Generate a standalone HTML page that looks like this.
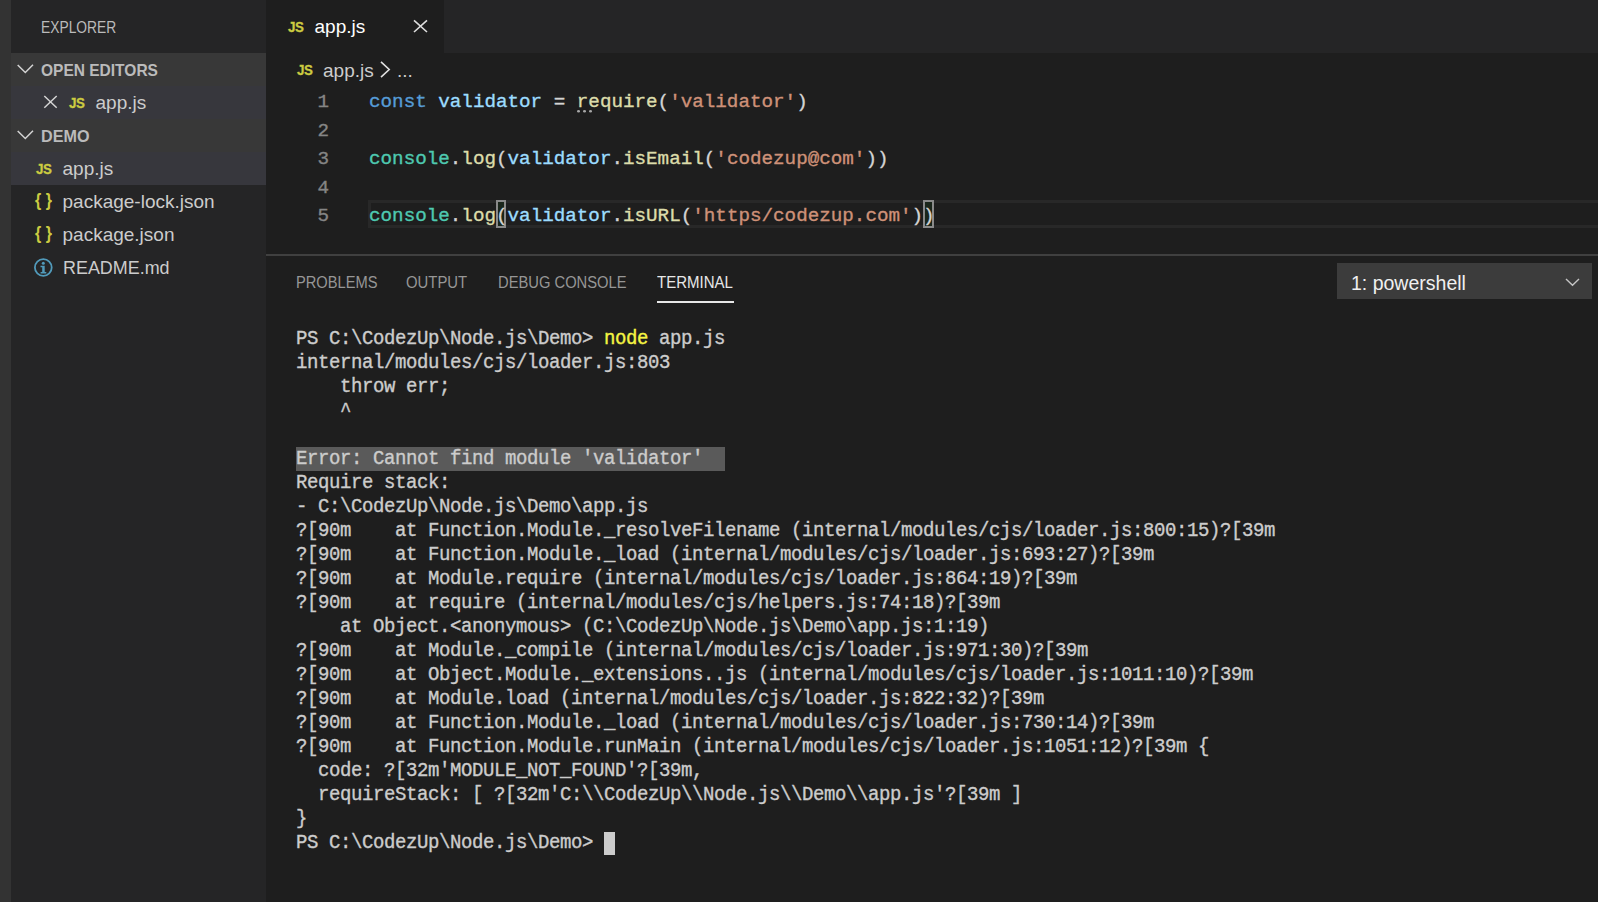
<!DOCTYPE html>
<html><head><meta charset="utf-8">
<style>
*{margin:0;padding:0;box-sizing:border-box}
html,body{width:1598px;height:902px;overflow:hidden;background:#1e1e1e}
body{position:relative;font-family:"Liberation Sans",sans-serif}
.a{position:absolute;white-space:pre}
.sx{display:inline-block;transform-origin:0 0}
#act{left:0;top:0;width:11px;height:902px;background:#333333}
#side{left:11px;top:0;width:255px;height:902px;background:#252526}
.row{position:absolute;left:11px;width:255px;height:33px}
.hdr{background:#383838}
.sel{background:#37373d}
.ui{color:#cccccc;font-size:19px;line-height:33px;height:33px}
#tabs{left:266px;top:0;width:1332px;height:53px;background:#252526}
#tab{left:266px;top:0;width:178px;height:53px;background:#1e1e1e}
.mono{font-family:"Liberation Mono",monospace;-webkit-text-stroke:0.35px currentColor}
.code{font-size:19.24px;line-height:28.5px;height:28.5px}
.term{font-size:19px;letter-spacing:-0.402px;line-height:24px;height:24px;color:#cccccc;left:296px;transform:scaleY(1.08);transform-origin:0 17.3px}
.k{color:#569cd6}.v{color:#9cdcfe}.f{color:#dcdcaa}.s{color:#ce9178}.t{color:#4ec9b0}.p{color:#d4d4d4}
.ln{color:#858585;text-align:right;width:40px;left:289px}
svg{position:absolute;overflow:visible}
.br{display:inline-block;transform:translateY(-2px) scaleY(1.15);transform-origin:0 50%}
.js{display:inline-block;font-size:15.5px;font-weight:bold;color:#cbcb41;letter-spacing:-0.6px;transform:scaleX(0.86);transform-origin:0 50%;-webkit-text-stroke:0.3px #cbcb41}
</style></head><body>
<div id="act" class="a"></div>
<div id="side" class="a"></div>

<!-- sidebar -->
<div class="a" style="left:41px;top:1px;height:53px;line-height:53px;font-size:16.3px;color:#bbbbbb"><span class="sx" style="transform:scaleX(0.848)">EXPLORER</span></div>

<div class="row hdr" style="top:53px"></div>
<div class="row sel" style="top:86px"></div>
<div class="row hdr" style="top:119px"></div>
<div class="row sel" style="top:152px"></div>

<svg style="left:0;top:0" width="1" height="1"><g fill="none" stroke="#d4d4d4" stroke-width="1.5">
<path d="M17.7 65 L25.3 72.5 L33 64.8"/>
<path d="M17.7 131 L25.3 138.5 L33 130.8"/>
</g></svg>
<div class="a" style="left:41px;top:54px;height:33px;line-height:33px;font-size:16.5px;font-weight:bold;color:#bbbbbb"><span class="sx" style="transform:scaleX(0.94)">OPEN EDITORS</span></div>
<div class="a" style="left:41px;top:120px;height:33px;line-height:33px;font-size:16.5px;font-weight:bold;color:#bbbbbb"><span class="sx" style="transform:scaleX(0.98)">DEMO</span></div>

<svg style="left:0;top:0" width="1" height="1"><g fill="none" stroke="#d4d4d4" stroke-width="1.5">
<path d="M44.3 96 L56.7 107.7 M56.7 96 L44.3 107.7"/></g></svg>
<div class="a" style="left:69px;top:86px;height:33px;line-height:33px" ><span class="js">JS</span></div>
<div class="a ui" style="left:95.5px;top:86px">app.js</div>

<div class="a" style="left:36px;top:152px;height:33px;line-height:33px" ><span class="js">JS</span></div>
<div class="a ui" style="left:62.5px;top:152px">app.js</div>
<div class="a" style="left:35px;top:185px;height:33px;line-height:33px;font-size:16px;font-weight:bold;color:#cbcb41"><span class="br">{ }</span></div>
<div class="a ui" style="left:62.5px;top:185px">package-lock.json</div>
<div class="a" style="left:35px;top:218px;height:33px;line-height:33px;font-size:16px;font-weight:bold;color:#cbcb41"><span class="br">{ }</span></div>
<div class="a ui" style="left:62.5px;top:218px">package.json</div>
<svg style="left:0;top:0" width="1" height="1"><circle cx="43.3" cy="267.5" r="8.4" fill="none" stroke="#519aba" stroke-width="1.8"/><g fill="#519aba"><circle cx="43.3" cy="263.3" r="1.5"/><path d="M40.5 265.8 H44.7 V272 H46.3 V273.5 H40.6 V272 H42.2 V267.2 H40.5 Z"/></g></svg>
<div class="a ui" style="left:62.5px;top:251px"><span class="sx" style="transform:scaleX(0.943)">README.md</span></div>

<!-- tabs -->
<div id="tabs" class="a"></div>
<div id="tab" class="a"></div>
<div class="a" style="left:288px;top:0;height:53px;line-height:53px" ><span class="js">JS</span></div>
<div class="a" style="left:314.5px;top:0;height:53px;line-height:53px;font-size:19px;color:#ffffff">app.js</div>
<svg style="left:0;top:0" width="1" height="1"><g fill="none" stroke="#dddddd" stroke-width="1.6">
<path d="M414 20.3 L427 32 M427 20.3 L414 32"/></g></svg>

<!-- breadcrumb -->
<div class="a" style="left:297px;top:53px;height:33px;line-height:33px" ><span class="js">JS</span></div>
<div class="a" style="left:323px;top:54px;height:33px;line-height:33px;font-size:19px;color:#cccccc">app.js</div>
<svg style="left:0;top:0" width="1" height="1"><g fill="none" stroke="#e0e0e0" stroke-width="1.6">
<path d="M381 61.8 L389.2 69.5 L381 77.2"/></g></svg>
<div class="a" style="left:397px;top:54px;height:33px;line-height:33px;font-size:19px;color:#cccccc">...</div>

<!-- editor -->
<div class="a" style="left:368px;top:200px;width:1230px;height:28px;border:3px solid #282828;border-right:none"></div>
<div class="a" style="left:496px;top:200px;width:10.2px;height:28px;border:2px solid #8a8a8a;background:#1b261b"></div>
<div class="a" style="left:923px;top:200px;width:11px;height:28px;border:2px solid #8a8a8a;background:#1b261b"></div>
<div class="a mono code ln" style="top:88.1px">1</div>
<div class="a mono code ln" style="top:116.6px">2</div>
<div class="a mono code ln" style="top:145.1px">3</div>
<div class="a mono code ln" style="top:173.6px">4</div>
<div class="a mono code ln" style="top:202.1px">5</div>
<div class="a mono code" style="left:369px;top:88.1px"><span class="k">const</span> <span class="v">validator</span> <span class="p">=</span> <span class="f">require</span><span class="p">(</span><span class="s">'validator'</span><span class="p">)</span></div>
<svg style="left:0;top:0" width="1" height="1"><g fill="#a8a8a8"><ellipse cx="578.5" cy="111.3" rx="1.5" ry="1.2"/><ellipse cx="584.5" cy="111.3" rx="1.5" ry="1.2"/><ellipse cx="590.5" cy="111.3" rx="1.5" ry="1.2"/></g></svg>
<div class="a mono code" style="left:369px;top:145.1px"><span class="t">console</span><span class="p">.</span><span class="f">log</span><span class="p">(</span><span class="v">validator</span><span class="p">.</span><span class="f">isEmail</span><span class="p">(</span><span class="s">'codezup@com'</span><span class="p">))</span></div>
<div class="a mono code" style="left:369px;top:202.1px"><span class="t">console</span><span class="p">.</span><span class="f">log</span><span class="p">(</span><span class="v">validator</span><span class="p">.</span><span class="f">isURL</span><span class="p">(</span><span class="s">'https/codezup.com'</span><span class="p">))</span></div>

<!-- panel -->
<div class="a" style="left:266px;top:254px;width:1332px;height:1.5px;background:#404040"></div>

<!-- panel tabs -->
<div class="a" style="left:295.5px;top:267px;height:30px;line-height:30px;font-size:16.3px;color:#969696"><span class="sx" style="transform:scaleX(0.90)">PROBLEMS</span></div>
<div class="a" style="left:406px;top:267px;height:30px;line-height:30px;font-size:16.3px;color:#969696"><span class="sx" style="transform:scaleX(0.914)">OUTPUT</span></div>
<div class="a" style="left:497.5px;top:267px;height:30px;line-height:30px;font-size:16.3px;color:#969696"><span class="sx" style="transform:scaleX(0.905)">DEBUG CONSOLE</span></div>
<div class="a" style="left:656.5px;top:267px;height:30px;line-height:30px;font-size:16.3px;color:#e7e7e7"><span class="sx" style="transform:scaleX(0.922)">TERMINAL</span></div>
<div class="a" style="left:657px;top:301px;width:76.5px;height:2px;background:#e7e7e7"></div>
<!-- dropdown -->
<div class="a" style="left:1337px;top:263px;width:255px;height:36px;background:#3c3c3c"></div>
<div class="a" style="left:1351px;top:265px;height:36px;line-height:36px;font-size:19.5px;color:#f0f0f0">1: powershell</div>
<svg style="left:0;top:0" width="1" height="1"><g fill="none" stroke="#c5c5c5" stroke-width="1.4"><path d="M1566 279 L1572.5 285.3 L1579 279"/></g></svg>
<!-- terminal -->
<div class="a" style="left:296px;top:447px;width:429px;height:24px;background:#5a5a5a"></div>
<div class="a mono term" style="top:326.5px">PS C:\CodezUp\Node.js\Demo&gt; <span style="color:#f5f543">node</span> app.js</div>
<div class="a mono term" style="top:350.5px">internal/modules/cjs/loader.js:803</div>
<div class="a mono term" style="top:374.5px">    throw err;</div>
<div class="a mono term" style="top:398.5px">    ^</div>
<div class="a mono term" style="top:446.5px">Error: Cannot find module &#x27;validator&#x27;</div>
<div class="a mono term" style="top:470.5px">Require stack:</div>
<div class="a mono term" style="top:494.5px">- C:\CodezUp\Node.js\Demo\app.js</div>
<div class="a mono term" style="top:518.5px">?[90m    at Function.Module._resolveFilename (internal/modules/cjs/loader.js:800:15)?[39m</div>
<div class="a mono term" style="top:542.5px">?[90m    at Function.Module._load (internal/modules/cjs/loader.js:693:27)?[39m</div>
<div class="a mono term" style="top:566.5px">?[90m    at Module.require (internal/modules/cjs/loader.js:864:19)?[39m</div>
<div class="a mono term" style="top:590.5px">?[90m    at require (internal/modules/cjs/helpers.js:74:18)?[39m</div>
<div class="a mono term" style="top:614.5px">    at Object.&lt;anonymous&gt; (C:\CodezUp\Node.js\Demo\app.js:1:19)</div>
<div class="a mono term" style="top:638.5px">?[90m    at Module._compile (internal/modules/cjs/loader.js:971:30)?[39m</div>
<div class="a mono term" style="top:662.5px">?[90m    at Object.Module._extensions..js (internal/modules/cjs/loader.js:1011:10)?[39m</div>
<div class="a mono term" style="top:686.5px">?[90m    at Module.load (internal/modules/cjs/loader.js:822:32)?[39m</div>
<div class="a mono term" style="top:710.5px">?[90m    at Function.Module._load (internal/modules/cjs/loader.js:730:14)?[39m</div>
<div class="a mono term" style="top:734.5px">?[90m    at Function.Module.runMain (internal/modules/cjs/loader.js:1051:12)?[39m {</div>
<div class="a mono term" style="top:758.5px">  code: ?[32m&#x27;MODULE_NOT_FOUND&#x27;?[39m,</div>
<div class="a mono term" style="top:782.5px">  requireStack: [ ?[32m&#x27;C:\\CodezUp\\Node.js\\Demo\\app.js&#x27;?[39m ]</div>
<div class="a mono term" style="top:806.5px">}</div>
<div class="a mono term" style="top:830.5px">PS C:\CodezUp\Node.js\Demo&gt; </div>
<div class="a" style="left:604px;top:832px;width:11px;height:23px;background:#cccccc"></div>

</body></html>
